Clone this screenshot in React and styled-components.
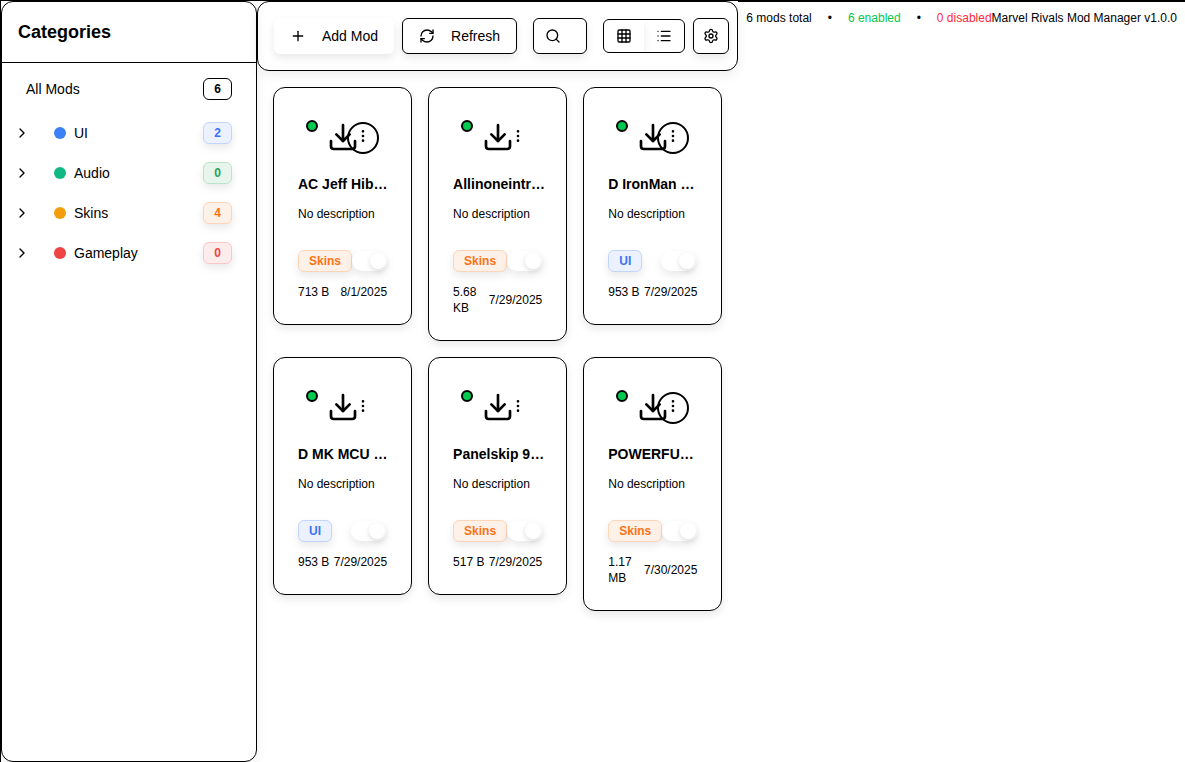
import React, { useState } from "react";
import styled, { createGlobalStyle, css } from "styled-components";
import {
  ChevronRight,
  Download,
  EllipsisVertical,
  Grid3x3,
  List,
  Plus,
  RefreshCw,
  Search,
  Settings,
} from "lucide-react";

const GlobalStyle = createGlobalStyle`
  *, *::before, *::after { box-sizing: border-box; }
  body {
    margin: 0;
    background: #fff;
    color: #000;
    font-family: "Liberation Sans", Arial, sans-serif;
    font-size: 14px;
    line-height: 20px;
  }
  button, input { font: inherit; color: inherit; }
  button { background: none; border: 0; padding: 0; cursor: pointer; }
  h2, h3, p { margin: 0; }
`;

const softShadow = "0 4px 8px rgba(0, 0, 0, 0.09)";
const panelShadow = "0 4px 12px rgba(0, 0, 0, 0.07)";

const tones = {
  plain: { text: "#000", fill: "#fff", line: "#000" },
  blue: { text: "#3b73f6", fill: "#ebf1fe", line: "#c4d6fc" },
  green: { text: "#22a35a", fill: "#e8f5ed", line: "#bce3cc" },
  orange: { text: "#f97316", fill: "#fef1e8", line: "#fdd5b9" },
  red: { text: "#ef4444", fill: "#fdecec", line: "#fac7c7" },
};

const Window = styled.div`
  display: flex;
  min-height: 100vh;
  border: solid #000;
  border-width: 1px 0 0 1px;
`;

const Sidebar = styled.aside`
  flex: 0 0 256px;
  border: 1px solid #000;
  border-radius: 12px;
  box-shadow: ${panelShadow};
`;

const SidebarHeader = styled.header`
  padding: 16px;
  border-bottom: 1px solid #000;
`;

const SidebarTitle = styled.h2`
  font-size: 18px;
  line-height: 28px;
  font-weight: 700;
`;

const CategoryNav = styled.nav`
  display: flex;
  flex-direction: column;
  gap: 8px;
  padding: 8px;
`;

const CategoryList = styled.div`
  display: flex;
  flex-direction: column;
  gap: 4px;
`;

const CategoryRow = styled.div`
  display: flex;
  gap: 4px;
`;

const Expander = styled.button`
  display: flex;
  align-items: center;
  justify-content: center;
  width: 24px;
  height: 36px;
`;

const CategoryButton = styled.button`
  flex: 1;
  display: flex;
  align-items: center;
  gap: 8px;
  height: 36px;
  padding: 0 16px;
`;

const CategoryName = styled.span`
  flex: 1;
  text-align: left;
`;

const CategoryDot = styled.span`
  width: 12px;
  height: 12px;
  border-radius: 50%;
  background: ${({ $color }) => $color};
`;

const Badge = styled.span`
  padding: 2px 10px;
  border: 1px solid ${({ $tone }) => tones[$tone].line};
  border-radius: 6px;
  background: ${({ $tone }) => tones[$tone].fill};
  color: ${({ $tone }) => tones[$tone].text};
  font-size: 12px;
  line-height: 16px;
  font-weight: 700;
  box-shadow: ${({ $tone }) => ($tone === "plain" ? "none" : softShadow)};
`;

const Main = styled.main`
  flex: 1;
  min-width: 0;
`;

const Toolbar = styled.div`
  display: flex;
  align-items: center;
  gap: 8px;
  padding: 16px 8px 16px 16px;
  border: 1px solid #000;
  border-radius: 12px;
  box-shadow: ${panelShadow};
`;

const ToolButton = styled.button`
  display: flex;
  align-items: center;
  gap: 16px;
  height: 36px;
  padding: 0 16px;
  border-radius: 6px;
  white-space: nowrap;
  box-shadow: ${softShadow};
  ${({ $outlined }) => $outlined && css`border: 1px solid #000;`}
`;

const SettingsButton = styled(ToolButton)`
  flex: 0 0 36px;
  justify-content: center;
  padding: 0;
`;

const SearchBox = styled.label`
  position: relative;
  flex: 1;
  min-width: 0;
  margin: 0 8px;

  svg {
    position: absolute;
    top: 10px;
    left: 12px;
  }
`;

const SearchInput = styled.input`
  display: block;
  width: 100%;
  height: 36px;
  padding: 0 12px 0 40px;
  border: 1px solid #000;
  border-radius: 6px;
  background: #fff;
  box-shadow: ${softShadow};
`;

const ViewSwitch = styled.div`
  display: flex;
  overflow: hidden;
  border: 1px solid #000;
  border-radius: 6px;
`;

const ViewButton = styled.button`
  display: flex;
  align-items: center;
  justify-content: center;
  width: 40px;
  height: 32px;
  box-shadow: ${({ $active }) => ($active ? softShadow : "none")};
`;

const ModGrid = styled.div`
  display: grid;
  grid-template-columns: repeat(3, minmax(0, 1fr));
  align-items: start;
  gap: 16px;
  padding: 16px;
`;

const Card = styled.article`
  display: flex;
  flex-direction: column;
  gap: 12px;
  padding: 24px;
  border: 1px solid #000;
  border-radius: 12px;
  box-shadow: ${softShadow};
`;

const Preview = styled.div`
  position: relative;
  display: flex;
  align-items: center;
  justify-content: center;
  height: 50px;
`;

const StatusDot = styled.span`
  position: absolute;
  top: 8px;
  left: 8px;
  width: 12px;
  height: 12px;
  border: 2px solid #000;
  border-radius: 50%;
  background: #00c950;
`;

const MoreButton = styled.button`
  position: absolute;
  top: 8px;
  right: 8px;
  display: flex;
  align-items: center;
  justify-content: center;
  width: 32px;
  height: 32px;
`;

const Ring = styled.span`
  position: absolute;
  top: 10px;
  right: 8px;
  width: 32px;
  height: 32px;
  border: 2px solid #000;
  border-radius: 50%;
`;

const ModName = styled.h3`
  font-size: 14px;
  line-height: 20px;
  font-weight: 700;
  white-space: nowrap;
`;

const Description = styled.p`
  min-height: 32px;
  font-size: 12px;
  line-height: 16px;
`;

const CardRow = styled.div`
  display: flex;
  align-items: center;
  justify-content: space-between;
`;

const MetaRow = styled(CardRow)`
  font-size: 12px;
  line-height: 16px;
`;

const Toggle = styled.input`
  appearance: none;
  flex: 0 0 36px;
  height: 20px;
  margin: 0;
  padding: 2px;
  border-radius: 10px;
  background: #fff;
  box-shadow: ${softShadow};
  cursor: pointer;

  &::before {
    content: "";
    display: block;
    width: 16px;
    height: 16px;
    border-radius: 50%;
    background: #fff;
    box-shadow: 0 2px 5px rgba(0, 0, 0, 0.14);
  }

  &:checked::before {
    margin-left: 16px;
  }
`;

const StatusBar = styled.footer`
  display: flex;
  align-items: flex-start;
  padding: 8px;
  border-top: 1px solid #000;
  font-size: 12px;
  line-height: 16px;
  white-space: nowrap;
`;

const Counts = styled.div`
  display: flex;
  gap: 16px;
`;

const Count = styled.span`
  color: ${({ $color }) => $color || "inherit"};
`;

const categories = [
  { name: "UI", color: "#3b82f6", tone: "blue", count: 2 },
  { name: "Audio", color: "#10b981", tone: "green", count: 0 },
  { name: "Skins", color: "#f59e0b", tone: "orange", count: 4 },
  { name: "Gameplay", color: "#ef4444", tone: "red", count: 0 },
];

const mods = [
  { name: "AC Jeff Hib…", category: "Skins", size: "713 B", date: "8/1/2025", ring: true },
  { name: "Allinoneintr…", category: "Skins", size: "5.68 KB", date: "7/29/2025" },
  { name: "D IronMan …", category: "UI", size: "953 B", date: "7/29/2025", ring: true },
  { name: "D MK MCU …", category: "UI", size: "953 B", date: "7/29/2025" },
  { name: "Panelskip 9…", category: "Skins", size: "517 B", date: "7/29/2025" },
  { name: "POWERFU…", category: "Skins", size: "1.17 MB", date: "7/30/2025", ring: true },
];

function ModCard({ mod }) {
  const [enabled, setEnabled] = useState(true);
  return (
    <Card>
      <Preview>
        <Download size={32} />
        <StatusDot />
        {mod.ring && <Ring />}
        <MoreButton aria-label={`Options for ${mod.name}`}>
          <EllipsisVertical size={16} />
        </MoreButton>
      </Preview>
      <ModName>{mod.name}</ModName>
      <Description>No description</Description>
      <CardRow>
        <Badge $tone={mod.category === "UI" ? "blue" : "orange"}>{mod.category}</Badge>
        <Toggle
          type="checkbox"
          aria-label={`Enable ${mod.name}`}
          checked={enabled}
          onChange={(e) => setEnabled(e.target.checked)}
        />
      </CardRow>
      <MetaRow>
        <span>{mod.size}</span>
        <span>{mod.date}</span>
      </MetaRow>
    </Card>
  );
}

export default function App() {
  const [view, setView] = useState("grid");
  return (
    <>
      <GlobalStyle />
      <Window>
        <Sidebar>
          <SidebarHeader>
            <SidebarTitle>Categories</SidebarTitle>
          </SidebarHeader>
          <CategoryNav>
            <CategoryRow>
              <CategoryButton>
                <CategoryName>All Mods</CategoryName>
                <Badge $tone="plain">6</Badge>
              </CategoryButton>
            </CategoryRow>
            <CategoryList>
              {categories.map((c) => (
                <CategoryRow key={c.name}>
                  <Expander aria-label={`Expand ${c.name}`}>
                    <ChevronRight size={16} />
                  </Expander>
                  <CategoryButton>
                    <CategoryDot $color={c.color} />
                    <CategoryName>{c.name}</CategoryName>
                    <Badge $tone={c.tone}>{c.count}</Badge>
                  </CategoryButton>
                </CategoryRow>
              ))}
            </CategoryList>
          </CategoryNav>
        </Sidebar>
        <Main>
          <Toolbar>
            <ToolButton>
              <Plus size={16} />
              Add Mod
            </ToolButton>
            <ToolButton $outlined>
              <RefreshCw size={16} />
              Refresh
            </ToolButton>
            <SearchBox>
              <SearchInput type="text" aria-label="Search mods" />
              <Search size={16} />
            </SearchBox>
            <ViewSwitch>
              <ViewButton aria-label="Grid view" $active={view === "grid"} onClick={() => setView("grid")}>
                <Grid3x3 size={16} />
              </ViewButton>
              <ViewButton aria-label="List view" $active={view === "list"} onClick={() => setView("list")}>
                <List size={16} />
              </ViewButton>
            </ViewSwitch>
            <SettingsButton $outlined aria-label="Settings">
              <Settings size={16} />
            </SettingsButton>
          </Toolbar>
          <ModGrid>
            {mods.map((mod) => (
              <ModCard key={mod.name} mod={mod} />
            ))}
          </ModGrid>
        </Main>
        <StatusBar>
          <Counts>
            <Count>6 mods total</Count>
            <Count>•</Count>
            <Count $color="#00c950">6 enabled</Count>
            <Count>•</Count>
            <Count $color="#fb2c36">0 disabled</Count>
          </Counts>
          <span>Marvel Rivals Mod Manager v1.0.0</span>
        </StatusBar>
      </Window>
    </>
  );
}
